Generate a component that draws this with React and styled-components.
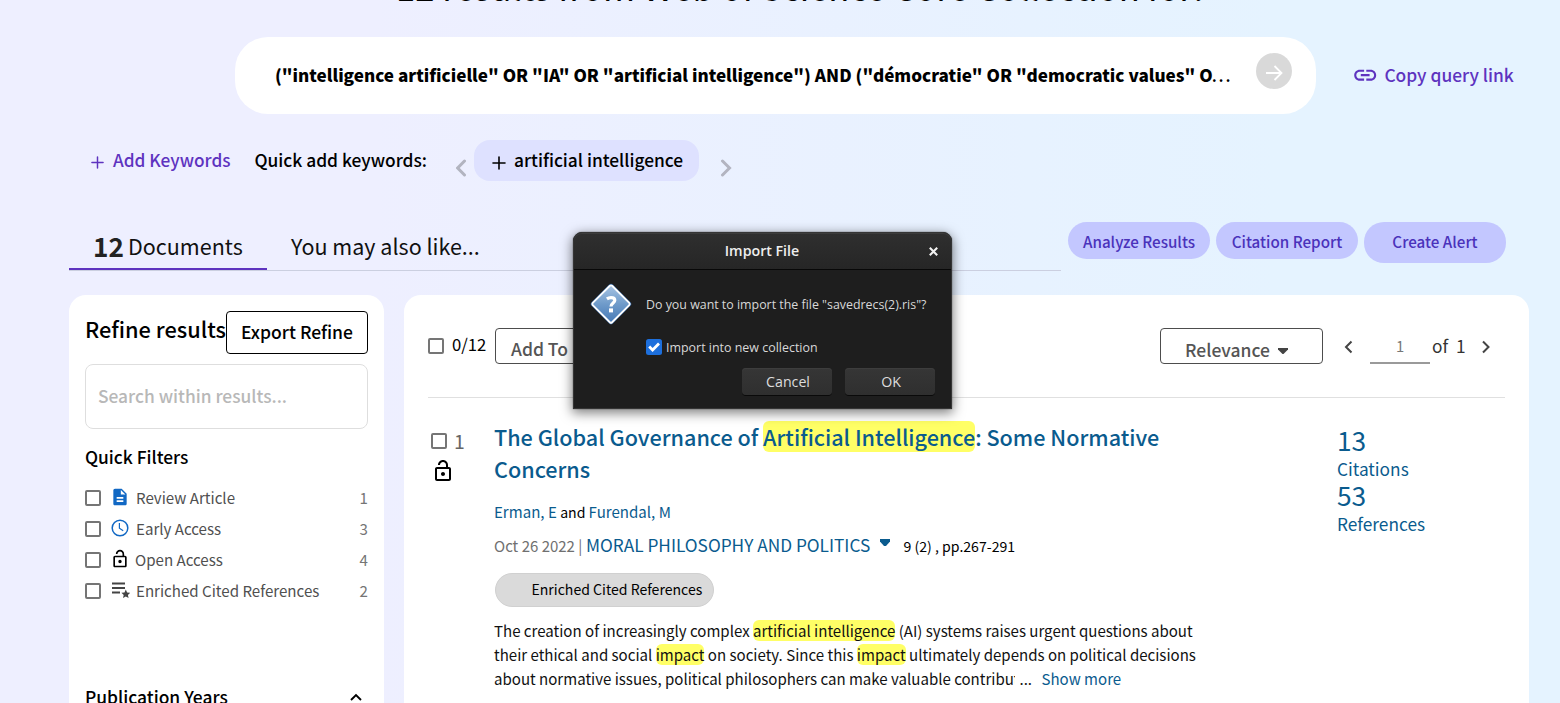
import React from "react";
import styled, { createGlobalStyle } from "styled-components";
import { MdLink, MdOutlineLockOpen, MdDescription } from "react-icons/md";

const GlobalStyle = createGlobalStyle`
  *, *::before, *::after { box-sizing: border-box; }
  body {
    margin: 0;
    font-family: "Noto Sans CJK SC", "Noto Sans", sans-serif;
    color: #000;
  }
  svg { display: block; flex: none; }
`;

const violet = "#5e33bf";
const linkBlue = "#0a5b8e";

const Page = styled.div`
  position: relative;
  width: 1560px;
  height: 703px;
  overflow: hidden;
  background: linear-gradient(90deg, #eeefff 24%, #e7f2ff 66%, #e5f3ff 82%);
`;

const Heading = styled.h1`
  margin: -34px 0 31px;
  padding-left: 396px;
  font-size: 34.6px;
  font-weight: 400;
  line-height: 40px;
  white-space: nowrap;
`;

/* Search row */
const SearchRow = styled.div`
  display: flex;
  align-items: center;
  height: 77px;
  padding-left: 235px;
`;

const SearchPill = styled.div`
  display: flex;
  align-items: center;
  justify-content: space-between;
  width: 1081px;
  height: 77px;
  padding: 0 24px 0 40px;
  border-radius: 33px;
  background: #fff;
`;

const Query = styled.div`
  padding-bottom: 2px;
  font-size: 17.1px;
  font-weight: 900;
  line-height: 30px;
  white-space: nowrap;
`;

const Dots = styled.span`
  margin-left: -1px;
  font-weight: 500;
  letter-spacing: 1.8px;
`;

const GoButton = styled.button`
  display: grid;
  place-items: center;
  width: 36px;
  height: 36px;
  margin: 0 0 9px;
  padding: 4px 0 0;
  border: 0;
  border-radius: 50%;
  background: #d9d9d9;
`;

const CopyLink = styled.a`
  display: flex;
  align-items: center;
  gap: 6px;
  margin-left: 36px;
  color: ${violet};
  font-size: 17.36px;
  font-weight: 500;
  line-height: 30px;
  white-space: nowrap;
`;

const CopyLabel = styled.span`
  padding-bottom: 2px;
`;

/* Keyword row */
const KeywordRow = styled.div`
  display: grid;
  grid-template-columns: 22px 141.5px 201.5px 18px 225px 40px;
  align-items: center;
  height: 41px;
  margin-top: 26px;
  padding-left: 91px;
  font-size: 17.35px;
  font-weight: 500;
  line-height: 30px;
  white-space: nowrap;
`;

const KeywordText = styled.span`
  padding-bottom: 2px;
  color: ${(p) => (p.$accent ? violet : "#000")};
  font-size: ${(p) => (p.$accent ? "17.25px" : "inherit")};
`;

const Drop = styled.span`
  padding-top: ${(p) => p.$by}px;
`;

const KeywordChip = styled.div`
  display: flex;
  align-items: center;
  gap: 8px;
  height: 41px;
  padding-left: 18px;
  border-radius: 16px;
  background: #dee1ff;
`;

/* Tabs */
const TabRow = styled.div`
  display: flex;
  align-items: flex-start;
  margin-top: 41px;
  padding-left: 69px;
`;

const TabBar = styled.div`
  display: flex;
  width: 992px;
  height: 49px;
  border-bottom: 1px solid #cbcfe0;
`;

const Tab = styled.div`
  display: flex;
  width: ${(p) => p.$width}px;
  height: 48px;
  padding: 4px 0 0 ${(p) => p.$indent}px;
  border-bottom: 2px solid ${(p) => (p.$active ? violet : "transparent")};
  color: #111;
  font-size: 21.5px;
  line-height: 40px;
  white-space: nowrap;
`;

const TabCount = styled.b`
  width: 35px;
  color: #222;
  font-size: 26.2px;
  font-weight: 700;
`;

const ActionGroup = styled.div`
  display: flex;
  align-items: flex-start;
  gap: 6px;
  margin-left: 7px;
`;

const ActionButton = styled.button`
  display: flex;
  justify-content: center;
  align-items: flex-start;
  width: 142px;
  height: ${(p) => (p.$tall ? 41 : 37)}px;
  padding: 0;
  border: 0;
  border-radius: 20px;
  background: #c3c7ff;
  color: #4a32bb;
  font: 500 15.2px/38px "Noto Sans CJK SC", sans-serif;
  white-space: nowrap;
`;

/* Panels */
const Panels = styled.div`
  display: flex;
  gap: 20px;
  height: 408px;
  margin-top: 24px;
  padding-left: 69px;
`;

const Panel = styled.section`
  width: ${(p) => p.$width}px;
  padding: ${(p) => p.$pad};
  border-radius: 17px 17px 0 0;
  background: #fff;
  overflow: hidden;
`;

const RefineHeader = styled.div`
  display: flex;
  justify-content: space-between;
  height: 43px;
`;

const RefineTitle = styled.h2`
  margin: 0 -4px 0 0;
  font-size: 21.75px;
  font-weight: 500;
  line-height: 35px;
  white-space: nowrap;
`;

const ExportButton = styled.button`
  width: 142px;
  height: 43px;
  padding: 0;
  border: 1px solid #000;
  border-radius: 4px;
  background: #fff;
  display: flex;
  justify-content: center;
  align-items: flex-start;
  color: #000;
  font: 500 17.5px/39px "Noto Sans CJK SC", sans-serif;
  white-space: nowrap;
`;

const SearchWithin = styled.div`
  height: 65px;
  margin-top: 10px;
  padding-left: 12px;
  border: 1px solid #dedede;
  border-radius: 8px;
  color: #b8b8b8;
  font-size: 17.38px;
  font-weight: 500;
  line-height: 61px;
`;

const FilterTitle = styled.h3`
  margin: 0;
  padding-top: 1px;
  height: 54px;
  font-size: 17.35px;
  font-weight: 500;
  line-height: 54px;
`;

const FilterRow = styled.div`
  display: grid;
  grid-template-columns: 24px 26px 1fr auto;
  align-items: center;
  height: 31px;
  color: #757575;
  font-size: 15.1px;
  line-height: 29px;
`;

const FilterCheck = styled.div`
  margin-top: -1px;
`;

const FilterName = styled.span`
  margin-top: -2px;
  color: #505050;
  padding-left: ${(p) => p.$indent}px;
`;

const FilterCount = styled.span`
  margin-top: -2px;
`;

const FilterIcon = styled.span`
  display: grid;
  width: 21px;
  justify-items: center;
  margin-top: -3px;
`;

const Box = styled.span`
  display: block;
  flex: none;
  width: 16px;
  height: 16px;
  border: 2px solid #757575;
  border-radius: 2px;
`;

const YearsRow = styled.div`
  display: flex;
  justify-content: space-between;
  align-items: center;
  margin-top: 75px;
  padding-right: 6px;
  font-size: 17.42px;
  font-weight: 500;
  line-height: 30px;
`;

/* Results */
const Toolbar = styled.div`
  display: grid;
  grid-template-columns: 24px 43px 665px 163px 47px 60px 1fr;
  align-items: start;
  height: 70px;
  border-bottom: 1px solid #e0e0e0;
`;

const ToolbarCell = styled.div`
  display: flex;
  align-items: center;
  height: 36px;
  padding-top: ${(p) => p.$drop ?? 0}px;
`;

const Selected = styled.span`
  font-size: 16.7px;
  line-height: 33px;
`;

const DropButton = styled.button`
  display: flex;
  width: ${(p) => p.$width}px;
  height: 36px;
  padding: 0 0 0 ${(p) => p.$indent}px;
  border: 1px solid #4d4d4d;
  border-radius: 4px;
  background: #fff;
  color: #555;
  font: 500 17.5px/${(p) => p.$line}px "Noto Sans CJK SC", sans-serif;
  white-space: nowrap;
`;

const DropCaret = styled.svg`
  margin: 19px 0 0 8.5px;
`;

const PageInput = styled.div`
  height: 36px;
  border-bottom: 2px solid #9a9a9a;
  color: #777;
  font-size: 14.8px;
  line-height: 35px;
  text-align: center;
`;

const PageTotal = styled.span`
  width: 50px;
  padding-left: 2px;
  color: #333;
  font-size: 17.3px;
  line-height: 34px;
  word-spacing: 4px;
  margin-top: -2px;
`;

const Record = styled.article`
  display: grid;
  grid-template-columns: 66px 843px 1fr;
`;

const RecordMark = styled.div`
  padding: 32px 0 0 3px;
`;

const RecordIndex = styled.div`
  display: flex;
  align-items: center;
  gap: 7px;
  height: 22px;
  color: #666;
  font-size: 19.4px;
  line-height: 22px;
`;

const RecordLock = styled.div`
  margin-top: 7px;
`;

const Title = styled.h2`
  margin: 0;
  padding-top: 23px;
  color: ${linkBlue};
  font-size: 21.6px;
  font-weight: 500;
  line-height: 32px;
  white-space: nowrap;
`;

const Mark = styled.mark`
  border-radius: 6px;
  background: #ffff66;
  color: inherit;
`;

const Authors = styled.p`
  margin: 15px 0 0;
  font-size: 15.07px;
  line-height: 24px;
`;

const And = styled.span`
  font-size: 14.1px;
`;

const Anchor = styled.a`
  color: ${linkBlue};
`;

const Source = styled.div`
  display: grid;
  grid-template-columns: 92px 293.5px 24px auto;
  height: 26px;
  margin-top: 8px;
  line-height: 26px;
  white-space: nowrap;
`;

const SourceDate = styled.span`
  color: #707070;
  font-size: 15px;
  padding-top: 1px;
`;

const Journal = styled.a`
  color: ${linkBlue};
  font-size: 17.25px;
`;

const Issue = styled.span`
  padding-top: 1px;
  font-size: 14.1px;
`;

const JournalCaret = styled.svg`
  margin-top: 7px;
`;

const EnrichedTag = styled.div`
  width: 219px;
  height: 34px;
  margin: 15px 0 0 0.5px;
  padding-left: 36px;
  border: 1px solid #d0d0d0;
  border-radius: 17px;
  background: #dadada;
  font-size: 14.07px;
  line-height: 31px;
`;

const Abstract = styled.div`
  margin-top: 12px;
  color: #111;
  font-size: 15.06px;
  line-height: 24px;
  white-space: nowrap;
`;

const LastLine = styled.div`
  display: flex;
`;

const Clip = styled.span`
  width: 520.5px;
  overflow: hidden;
`;

const More = styled.span`
  padding-left: 5px;
  width: 27px;
`;

const Stats = styled.div`
  padding-top: 28px;
  color: ${linkBlue};
`;

const StatNumber = styled.div`
  font-size: 26.3px;
  line-height: 27px;
`;

const StatLabel = styled.div`
  margin-bottom: -3px;
  font-size: 17.3px;
  line-height: 31px;
`;

/* Import dialog */
const Dialog = styled.div`
  position: absolute;
  left: 573px;
  top: 232px;
  width: 379px;
  height: 177px;
  border: 1px solid #353535;
  border-radius: 9px 9px 0 0;
  background: #1e1e1e;
  color: #d8d8d8;
  font-family: "Open Sans", "Noto Sans", sans-serif;
  box-shadow: 0 3px 12px 1px rgba(0, 0, 0, 0.5), 0 0 1px #000;
`;

const DialogHeader = styled.div`
  display: grid;
  grid-template-columns: 40px 1fr 40px;
  align-items: center;
  height: 37px;
  border-bottom: 1px solid #080808;
  border-radius: 8px 8px 0 0;
  background: linear-gradient(#2f2f2f, #262626);
  box-shadow: inset 0 1px #3c3c3c;
`;

const DialogTitle = styled.div`
  grid-column: 2;
  color: #eee;
  font-size: 14.2px;
  font-weight: 600;
  line-height: 36px;
  padding-right: 1px;
  text-align: center;
`;

const CloseIcon = styled.svg`
  margin-left: 17.5px;
`;

const DialogBody = styled.div`
  display: grid;
  grid-template-columns: 56px 1fr;
  padding: 13px 16px 0;
`;

const DialogText = styled.div`
  padding-top: 10px;
  font-size: 12.4px;
  line-height: 23px;
  white-space: nowrap;
`;

const CheckRow = styled.label`
  grid-column: 2;
  display: flex;
  align-items: center;
  gap: 4px;
  height: 16px;
  margin-top: 14px;
  font-size: 12.45px;
  white-space: nowrap;
`;

const DialogButtons = styled.div`
  display: flex;
  justify-content: flex-end;
  gap: 13px;
  margin-top: 13px;
  padding-right: 16px;
`;

const DialogButton = styled.button`
  width: 90px;
  height: 27px;
  padding: 0 0 0 2px;
  border: 0;
  border-radius: 4px;
  background: linear-gradient(#363636, #2f2f2f);
  box-shadow: inset 0 1px #3d3d3d, 0 1px #0a0a0a;
  color: #ddd;
  font: 14.2px/27px "Open Sans", "Noto Sans", sans-serif;
`;

const Plus = ({ size, color, stroke }) => (
  <svg width={size} height={size} viewBox="0 0 14 14" fill="none" stroke={color} strokeWidth={stroke} strokeLinecap="round">
    <path d="M7 1v12M1 7h12" />
  </svg>
);

const Chevron = ({ w, h, d, color = "#444", stroke = 2, cap = "butt" }) => (
  <svg width={w} height={h} viewBox={`0 0 ${w} ${h}`} fill="none" stroke={color} strokeWidth={stroke} strokeLinecap={cap}>
    <path d={d} />
  </svg>
);

const Clock = () => (
  <svg width="18" height="18" viewBox="0 0 18 18" fill="none" stroke="#1168c4" strokeWidth="1.5">
    <circle cx="9" cy="9" r="7.8" />
    <path d="M8.400 4v5.200l3.800 2.500" strokeWidth="1.2" />
  </svg>
);

const ListStar = () => (
  <svg width="20" height="20" viewBox="0 0 20 20" fill="#444">
    <path d="M2 2.500h13v2H2zM2 7h13v2H2zM2 11.500h8v2H2z" />
    <path d="M16.200 9.600l1.300 2.900 3.100.3-2.300 2.100.7 3.100-2.800-1.600-2.800 1.600.7-3.100-2.300-2.100 3.100-.3z" transform="translate(-.4 0)" />
  </svg>
);

const QuestionIcon = () => (
  <svg width="42" height="42" viewBox="0 0 42 42">
    <defs>
      <linearGradient id="diamond" x1="0" y1="0" x2="1" y2="1">
        <stop offset="0" stopColor="#a9c5e4" />
        <stop offset="0.5" stopColor="#6f9bca" />
        <stop offset="1" stopColor="#4478b6" />
      </linearGradient>
    </defs>
    <rect x="6" y="6" width="30" height="30" rx="2.5" transform="rotate(45 21 21)" fill="#3468a8" />
    <rect x="7.300" y="7.300" width="27.400" height="27.400" rx="1.600" transform="rotate(45 21 21)" fill="url(#diamond)" stroke="#fff" strokeWidth="1.8" />
    <path d="M16.900 15.900c1.300-.9 2.600-1.300 4.100-1.300 2.400 0 3.800 1 3.800 2.700 0 2.600-3.800 2.700-3.800 6.200" fill="none" stroke="#fff" strokeWidth="3.2" />
    <rect x="19" y="25.400" width="4" height="4" fill="#fff" />
  </svg>
);

const filters = [
  { name: "Review Article", count: 1, icon: <MdDescription size={20} color="#1168c4" /> },
  { name: "Early Access", count: 3, icon: <Clock /> },
  { name: "Open Access", count: 4, icon: <MdOutlineLockOpen size={20} color="#000" />, indent: 0 },
  { name: "Enriched Cited References", count: 2, icon: <ListStar /> },
];

const stats = [["13", "Citations"], ["53", "References"]];

function ImportDialog() {
  return (
    <Dialog>
      <DialogHeader>
        <DialogTitle>Import File</DialogTitle>
        <CloseIcon width="9" height="9" viewBox="0 0 9 9" stroke="#f2f2f2" strokeWidth="2.1">
          <path d="M.8.8l7.400 7.400M8.200.8L.8 8.200" />
        </CloseIcon>
      </DialogHeader>
      <DialogBody>
        <QuestionIcon />
        <DialogText>Do you want to import the file "savedrecs(2).ris"?</DialogText>
        <CheckRow>
          <svg width="16" height="16" viewBox="0 0 16 16">
            <rect width="16" height="16" rx="2.5" fill="#1d6fdc" />
            <path d="M3.200 7.600l3.400 3.400 6.400-6.400" fill="none" stroke="#fff" strokeWidth="2.8" />
          </svg>
          Import into new collection
        </CheckRow>
      </DialogBody>
      <DialogButtons>
        <DialogButton>Cancel</DialogButton>
        <DialogButton>OK</DialogButton>
      </DialogButtons>
    </Dialog>
  );
}

export default function App() {
  return (
    <>
      <GlobalStyle />
      <Page>
        <Heading>12 results from Web of Science Core Collection for:</Heading>

        <SearchRow>
          <SearchPill>
            <Query>
              ("intelligence artificielle" OR "IA" OR "artificial intelligence") AND ("démocratie" OR "democratic values" O
              <Dots>...</Dots>
            </Query>
            <GoButton aria-label="Search">
              <svg width="18" height="18" viewBox="0 0 18 18" fill="none" stroke="#fff" strokeWidth="1.8">
                <path d="M1 9h15M9.500 2l7 7-7 7" />
              </svg>
            </GoButton>
          </SearchPill>
          <CopyLink>
            <MdLink size={26.4} />
            <CopyLabel>Copy query link</CopyLabel>
          </CopyLink>
        </SearchRow>

        <KeywordRow>
          <Drop $by={4}><Plus size={13} color={violet} stroke={1.6} /></Drop>
          <KeywordText $accent>Add Keywords</KeywordText>
          <KeywordText>Quick add keywords:</KeywordText>
          <Drop $by={14}>
            <Chevron w={12} h={18} d="M8.500 2L1.700 9l6.800 7" color="#b2b4c0" stroke={3} cap="round" />
          </Drop>
          <KeywordChip>
            <Drop $by={4}><Plus size={14} color="#000" stroke={1.6} /></Drop>
            <KeywordText>artificial intelligence</KeywordText>
          </KeywordChip>
          <Drop $by={14}>
            <Chevron w={36} h={18} d="M23.500 2l7 7-7 7" color="#b2b4c0" stroke={3} cap="round" />
          </Drop>
        </KeywordRow>

        <TabRow>
          <TabBar>
            <Tab $active $width={198} $indent={24}>
              <TabCount>12</TabCount>Documents
            </Tab>
            <Tab $width={240} $indent={24}>You may also like...</Tab>
          </TabBar>
          <ActionGroup>
            <ActionButton>Analyze Results</ActionButton>
            <ActionButton>Citation Report</ActionButton>
            <ActionButton $tall>Create Alert</ActionButton>
          </ActionGroup>
        </TabRow>

        <Panels>
          <Panel $width={315} $pad="16px">
            <RefineHeader>
              <RefineTitle>Refine results</RefineTitle>
              <ExportButton>Export Refine</ExportButton>
            </RefineHeader>
            <SearchWithin>Search within results...</SearchWithin>
            <FilterTitle>Quick Filters</FilterTitle>
            {filters.map((f) => (
              <FilterRow key={f.name}>
                <FilterCheck><Box /></FilterCheck>
                <FilterIcon>{f.icon}</FilterIcon>
                <FilterName $indent={f.indent ?? 1}>{f.name}</FilterName>
                <FilterCount>{f.count}</FilterCount>
              </FilterRow>
            ))}
            <YearsRow>
              Publication Years
              <Chevron w={12} h={8} d="M1 7l5-5 5 5" color="#000" stroke={1.9} />
            </YearsRow>
          </Panel>

          <Panel $width={1125} $pad="33px 24px 0">
            <Toolbar>
              <ToolbarCell><Box /></ToolbarCell>
              <Selected>0/12</Selected>
              <DropButton $width={200} $indent={15} $line={40}>Add To Marked List</DropButton>
              <DropButton $width={163} $indent={24} $line={42}>
                Relevance
                <DropCaret width="10" height="6" viewBox="0 0 10 6" fill="#444">
                  <path d="M0 0h10v1.500L5.500 6h-1L0 1.500z" />
                </DropCaret>
              </DropButton>
              <ToolbarCell $drop={2}>
                <Chevron w={30} h={14} d="M28.500 1.500L23 7l5.500 5.500" />
              </ToolbarCell>
              <PageInput>1</PageInput>
              <ToolbarCell $drop={2}>
                <PageTotal>of 1</PageTotal>
                <Chevron w={12} h={14} d="M3 1.500L8.500 7 3 12.500" />
              </ToolbarCell>
            </Toolbar>

            <Record>
              <RecordMark>
                <RecordIndex><Box />1</RecordIndex>
                <RecordLock><MdOutlineLockOpen size={24} /></RecordLock>
              </RecordMark>
              <div>
                <Title>
                  The Global Governance of <Mark>Artificial Intelligence</Mark>: Some Normative
                  <br />
                  Concerns
                </Title>
                <Authors>
                  <Anchor>Erman, E</Anchor> <And>and </And><Anchor>Furendal, M</Anchor>
                </Authors>
                <Source>
                  <SourceDate>Oct 26 2022 |</SourceDate>
                  <Journal>MORAL PHILOSOPHY AND POLITICS</Journal>
                  <JournalCaret width="10" height="7" viewBox="0 0 10 7" fill={linkBlue}>
                    <path d="M0 0h10v2.500L6 7H4L0 2.500z" />
                  </JournalCaret>
                  <Issue>9 (2) , pp.267-291</Issue>
                </Source>
                <EnrichedTag>Enriched Cited References</EnrichedTag>
                <Abstract>
                  The creation of increasingly complex <Mark>artificial intelligence</Mark> (AI) systems raises urgent questions about
                  <br />
                  their ethical and social <Mark>impact</Mark> on society. Since this <Mark>impact</Mark> ultimately depends on political decisions
                  <LastLine>
                    <Clip>about normative issues, political philosophers can make valuable contributions</Clip>
                    <More>...</More>
                    <Anchor>Show more</Anchor>
                  </LastLine>
                </Abstract>
              </div>
              <Stats>
                {stats.map(([value, label]) => (
                  <React.Fragment key={label}>
                    <StatNumber>{value}</StatNumber>
                    <StatLabel>{label}</StatLabel>
                  </React.Fragment>
                ))}
              </Stats>
            </Record>
          </Panel>
        </Panels>
        <ImportDialog />
      </Page>
    </>
  );
}
